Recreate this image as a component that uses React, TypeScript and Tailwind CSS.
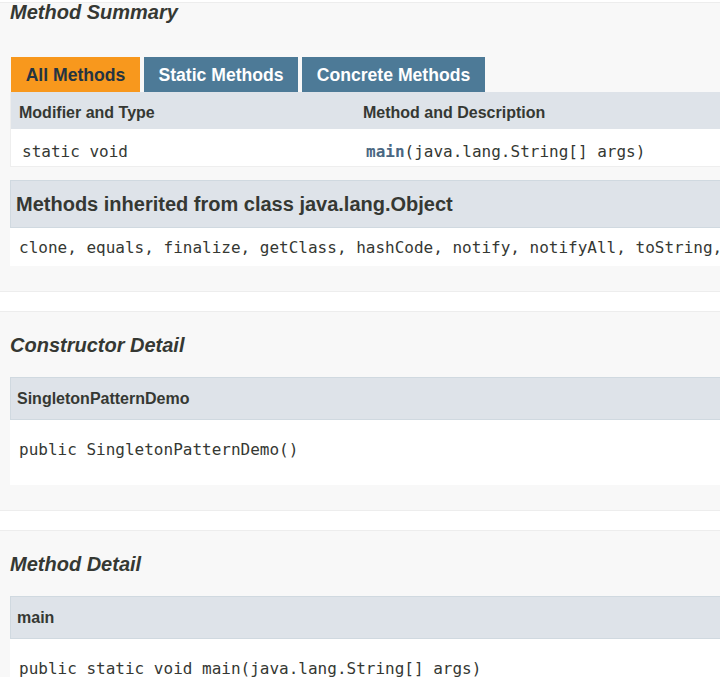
import React from "react";

const sans = { fontFamily: '"Liberation Sans", Arial, Helvetica, sans-serif' };

function Mono({ children }: { children: React.ReactNode }) {
  return (
    <span className="font-['DejaVu_Sans_Mono','Liberation_Mono',monospace] text-[16px]">
      {children}
    </span>
  );
}

function DetailBlock({ title, sig, mtHeader }: { title: string; sig: string; mtHeader: string }) {
  return (
    <>
      <div
        className={`${mtHeader} h-[43px] border border-[#d0d9e0] bg-[#dee3e9] pl-[6px] text-[16px] font-bold leading-[41px] text-[#353833]`}
      >
        {title}
      </div>
      <div className="bg-white pl-[9px] pb-[5px] leading-[60px] whitespace-nowrap">
        <Mono>{sig}</Mono>
      </div>
    </>
  );
}

export default function App() {
  return (
    <div
      className="w-[720px] h-[677px] overflow-hidden bg-white pt-[2px] text-[#353833]"
      style={sans}
    >
      <div className="w-[1000px]">
        {/* Method Summary */}
        <section className="border-y border-[#ededed] bg-[#f8f8f8] pl-[10px] pb-[25px]">
          <h3 className="text-[20px] font-bold italic leading-[18px]">Method Summary</h3>
          <div className="mt-[36px] ml-[1px] flex gap-[4px] text-[17.6px] font-bold leading-[34px]">
            <div className="h-[35px] w-[129px] bg-[#f8981d] pt-[1px] text-center text-[#253441]">All Methods</div>
            <div className="h-[35px] w-[154px] bg-[#4d7a97] pt-[1px] text-center text-white">Static Methods</div>
            <div className="h-[35px] w-[183px] bg-[#4d7a97] pt-[1px] text-center text-white">Concrete Methods</div>
          </div>
          <div className="border-l border-b border-[#eeeeee]">
            <div className="flex h-[37px] bg-[#dee3e9] pt-[4px] text-[16px] font-bold leading-[33px]">
              <div className="w-[343px] pl-[8px]">Modifier and Type</div>
              <div className="pl-[9px]">Method and Description</div>
            </div>
            <div className="flex h-[37px] bg-white pt-[8px] leading-[29px] whitespace-nowrap">
              <div className="w-[343px] pl-[11px]">
                <Mono>static void</Mono>
              </div>
              <div className="pl-[12px]">
                <Mono>
                  <b className="text-[#4a6782]">main</b>(java.lang.String[] args)
                </Mono>
              </div>
            </div>
          </div>
          <div className="mt-[13px] h-[48px] border border-[#d0d9e0] bg-[#dee3e9] pl-[5px] text-[20px] font-bold leading-[46px]">
            Methods inherited from class java.lang.Object
          </div>
          <div className="h-[38px] bg-white pl-[9px] pt-[1px] leading-[37px] whitespace-nowrap">
            <Mono>clone, equals, finalize, getClass, hashCode, notify, notifyAll, toString, wait, wait, wait</Mono>
          </div>
        </section>

        {/* Constructor Detail */}
        <section className="mt-[19px] border-y border-[#ededed] bg-[#f8f8f8] pl-[10px] pb-[25px]">
          <h3 className="mt-[24px] text-[20px] font-bold italic leading-[18px]">Constructor Detail</h3>
          <DetailBlock title="SingletonPatternDemo" sig="public SingletonPatternDemo()" mtHeader="mt-[23px]" />
        </section>

        {/* Method Detail */}
        <section className="mt-[19px] border-y border-[#ededed] bg-[#f8f8f8] pl-[10px] pb-[25px]">
          <h3 className="mt-[24px] text-[20px] font-bold italic leading-[18px]">Method Detail</h3>
          <DetailBlock title="main" sig="public static void main(java.lang.String[] args)" mtHeader="mt-[23px]" />
        </section>
      </div>
    </div>
  );
}
